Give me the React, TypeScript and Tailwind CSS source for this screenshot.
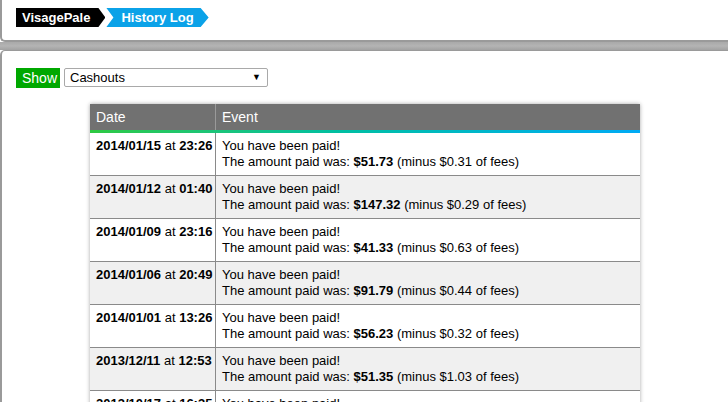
import React from 'react';

type Payment = {
  date: string;
  time: string;
  amount: string;
  fee: string;
};

const payments: Payment[] = [
  { date: '2014/01/15', time: '23:26', amount: '$51.73', fee: '$0.31' },
  { date: '2014/01/12', time: '01:40', amount: '$147.32', fee: '$0.29' },
  { date: '2014/01/09', time: '23:16', amount: '$41.33', fee: '$0.63' },
  { date: '2014/01/06', time: '20:49', amount: '$91.79', fee: '$0.44' },
  { date: '2014/01/01', time: '13:26', amount: '$56.23', fee: '$0.32' },
  { date: '2013/12/11', time: '12:53', amount: '$51.35', fee: '$1.03' },
  { date: '2013/10/17', time: '16:35', amount: '$48.12', fee: '$0.27' },
];

export default function App() {
  return (
    <div className="w-[728px] h-[402px] overflow-hidden bg-white text-black font-['Liberation_Sans',Arial,sans-serif]">
      {/* Top panel with breadcrumb */}
      <div className="h-[42px] border-l-2 border-b-2 border-[#9a9a9a] rounded-bl-[5px] pt-[8px] pl-[14px] flex items-start">
        <div className="h-[19px] bg-black text-white text-[13px] font-bold leading-[19px] pl-[6px] pr-[15px] [clip-path:polygon(0_0,calc(100%_-_7px)_0,100%_50%,calc(100%_-_7px)_100%,0_100%)]">
          VisagePale
        </div>
        <div className="h-[19px] ml-[1px] bg-[#0ba2e8] text-white text-[13px] font-bold leading-[19px] pl-[15px] pr-[15px] [clip-path:polygon(0_0,calc(100%_-_8px)_0,100%_50%,calc(100%_-_8px)_100%,0_100%,7px_50%)]">
          History Log
        </div>
      </div>

      {/* Textured separator */}
      <div className="h-[8px] bg-gradient-to-b from-[#a9a9a9] via-[#b4b4b4] to-[#a2a2a2]" />

      {/* Main panel */}
      <div className="h-[360px] border-l-2 border-t border-[#9a9a9a] rounded-tl-[5px] pt-[17px] pl-[14px]">
        <div className="flex items-start gap-[4px]">
          <div className="h-[20px] w-[44px] bg-[#00a800] text-white text-[14px] leading-[20px] pl-[6px]">Show</div>
          <div className="h-[19px] w-[204px] border border-[#a9a9a9] rounded-[2px] flex items-center justify-between pl-[5px] pr-[6px] text-[13px] leading-[17px]">
            <span>Cashouts</span>
            <span className="text-[9px]">▼</span>
          </div>
        </div>

        <div className="mt-[16px] ml-[74px] w-[550px] shadow-[0_0_4px_rgba(0,0,0,0.35)]">
          <div className="h-[26px] bg-[#717171] flex text-white text-[14px] leading-[26px]">
            <div className="w-[126px] pl-[6px] border-r border-[#9a9a9a]">Date</div>
            <div className="pl-[6px]">Event</div>
          </div>
          <div className="h-[3px] bg-gradient-to-r from-[#2ec940] to-[#00aaf5]" />
          {payments.map((p, i) => (
            <div
              key={p.date}
              className={`flex text-[13px] leading-[16px] border-b border-[#8a8a8a] ${
                i % 2 === 1 ? 'bg-[#f0f0f0]' : 'bg-white'
              }`}
            >
              <div className="w-[126px] shrink-0 px-[6px] pt-[5px] pb-[5px] border-r border-[#8a8a8a] whitespace-nowrap">
                <b>{p.date}</b> at <b>{p.time}</b>
              </div>
              <div className="pl-[6px] pt-[5px] pb-[5px] whitespace-nowrap">
                <div>You have been paid!</div>
                <div>
                  The amount paid was: <b>{p.amount}</b> (minus {p.fee} of fees)
                </div>
              </div>
            </div>
          ))}
        </div>
      </div>
    </div>
  );
}
